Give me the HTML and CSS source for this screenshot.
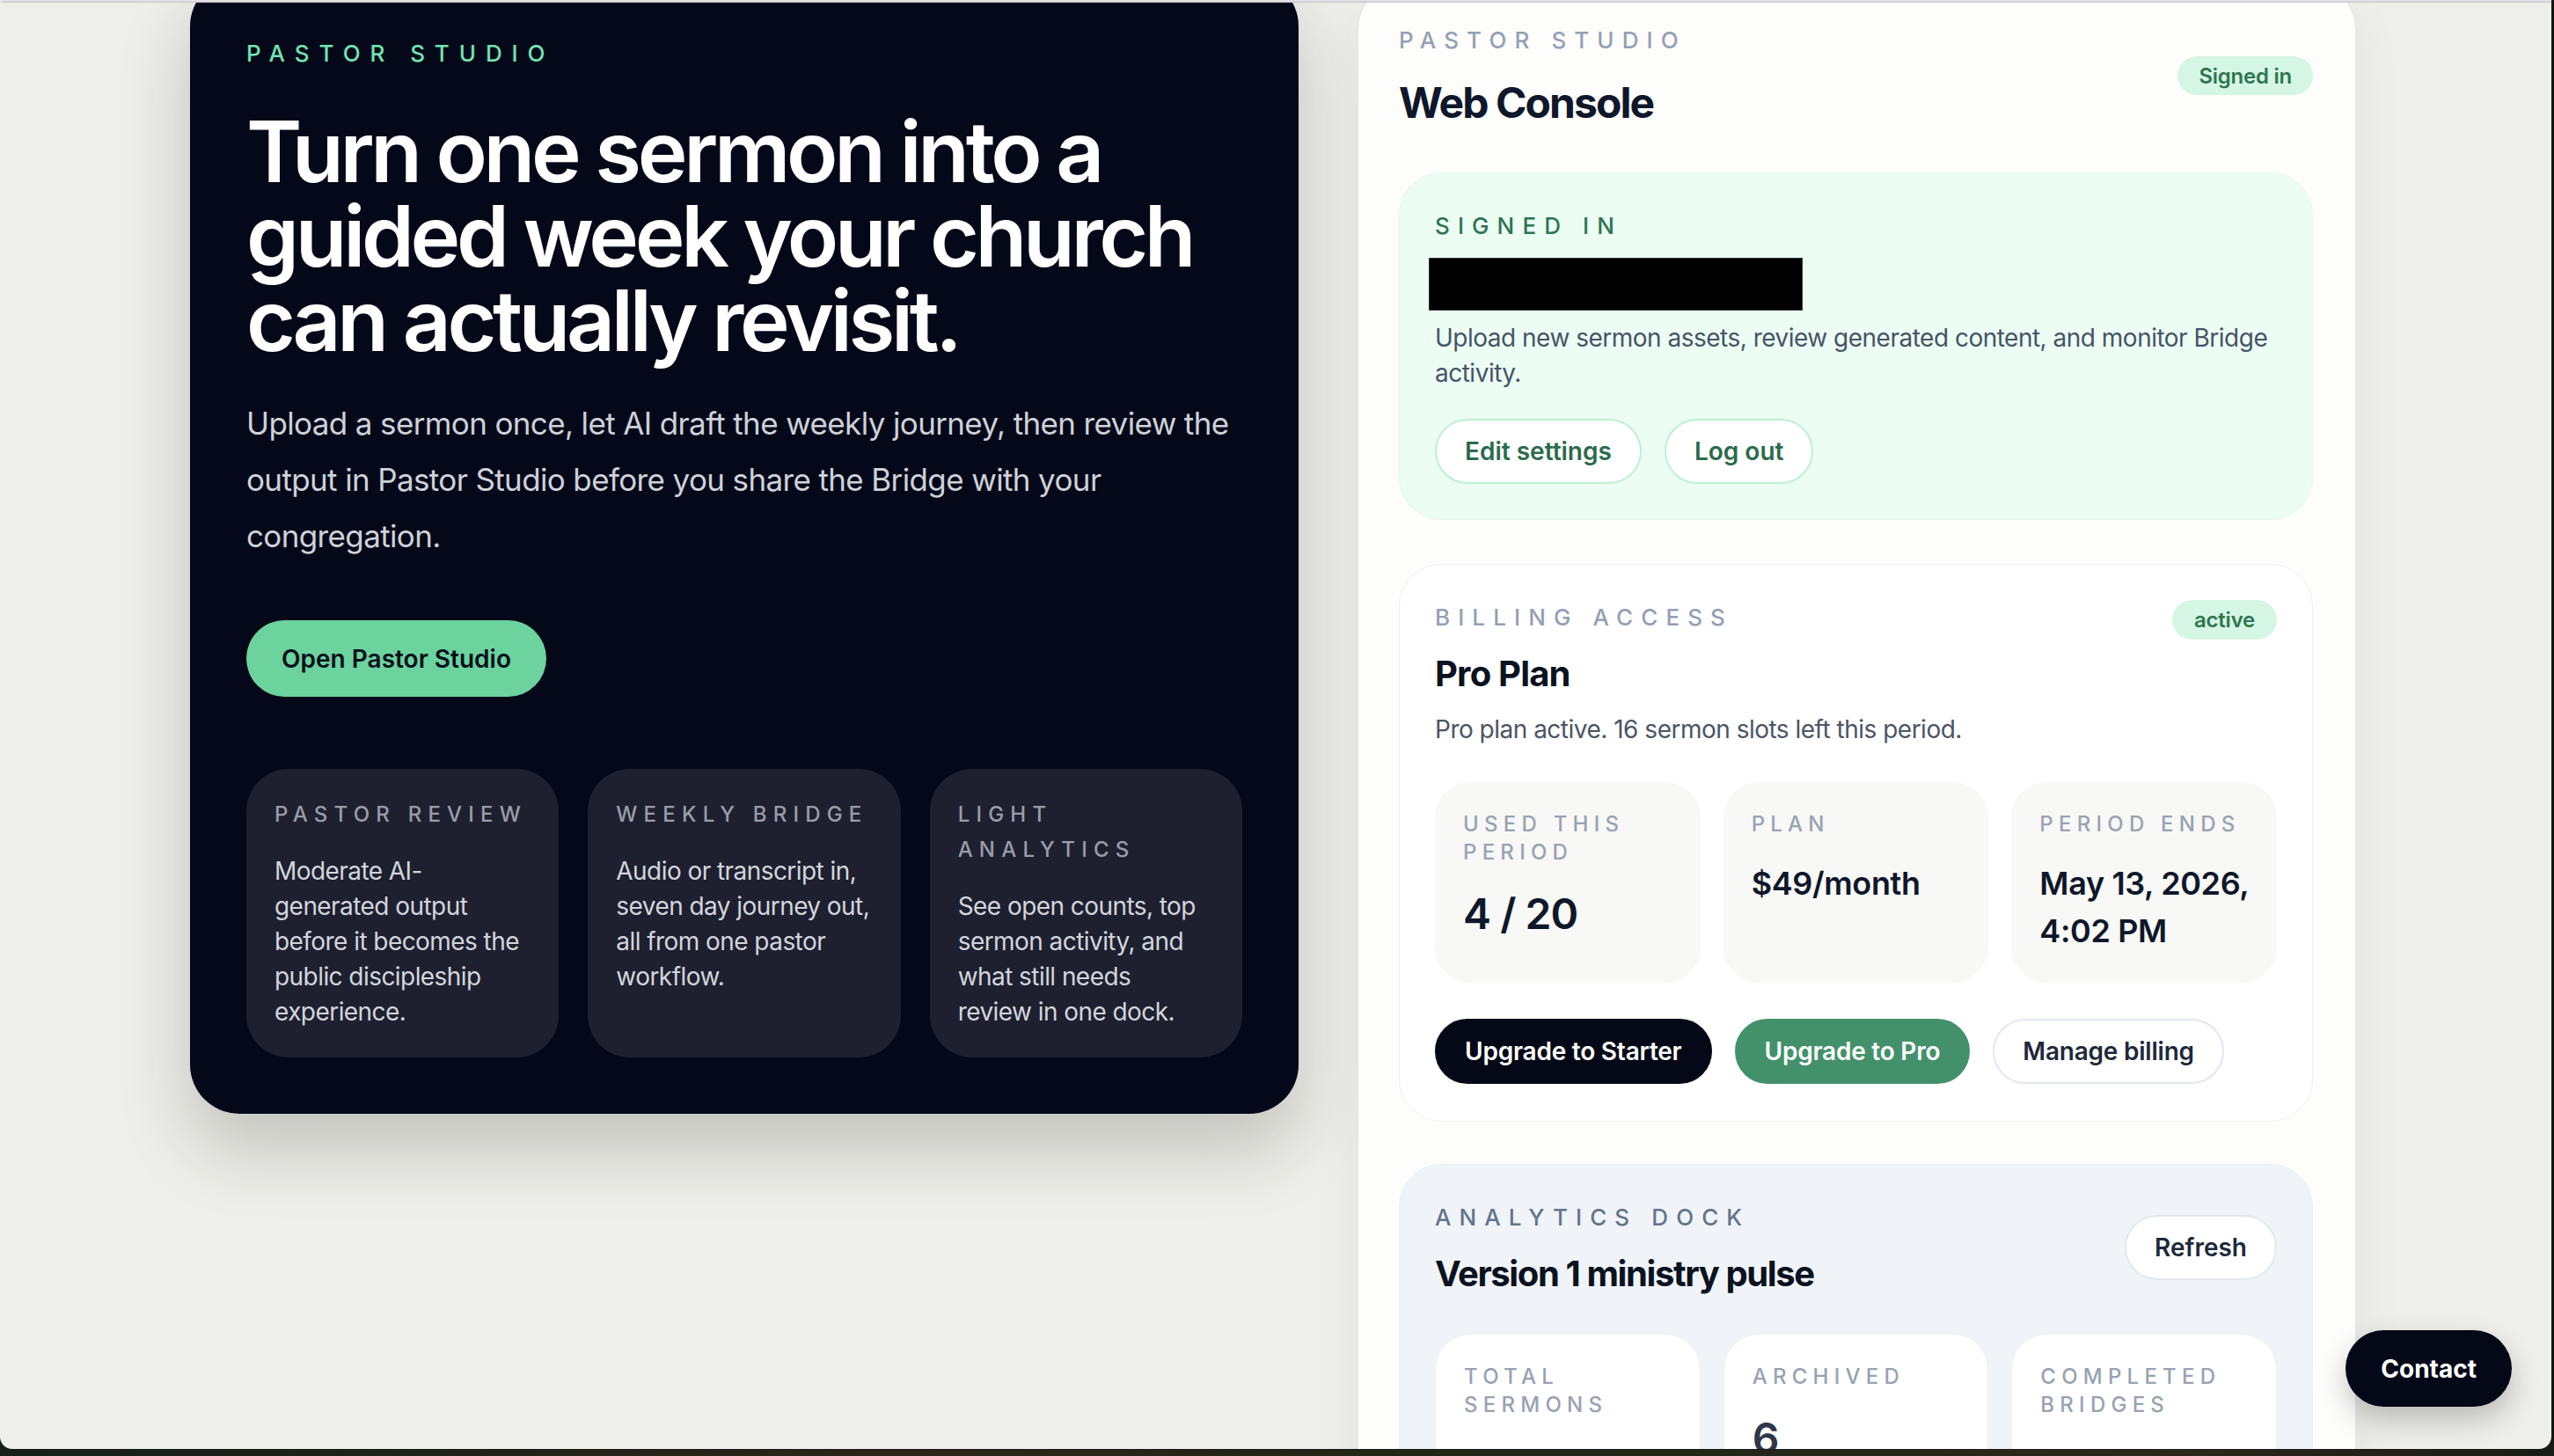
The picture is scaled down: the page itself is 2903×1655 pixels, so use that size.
FILE: index.html
```html
<!DOCTYPE html>
<html lang="en">
<head>
<meta charset="utf-8">
<title>Pastor Studio</title>
<link rel="stylesheet" href="styles.css">
</head>
<body>
<div class="chrome"></div>
<div class="viewport">
  <main class="layout">
    <section class="hero">
      <p class="hero-eyebrow">PASTOR STUDIO</p>
      <h1 class="hero-title">Turn one sermon into a<br>guided week your church<br>can actually revisit.</h1>
      <p class="hero-lede">Upload a sermon once, let AI draft the weekly journey, then review the output in Pastor Studio before you share the Bridge with your congregation.</p>
      <div class="hero-actions"><a class="btn-open" href="#">Open Pastor Studio</a></div>
      <div class="features">
        <div class="feature">
          <h3 class="feature-title">PASTOR REVIEW</h3>
          <p class="feature-text">Moderate AI-generated output before it becomes the public discipleship experience.</p>
        </div>
        <div class="feature">
          <h3 class="feature-title">WEEKLY BRIDGE</h3>
          <p class="feature-text">Audio or transcript in, seven day journey out, all from one pastor workflow.</p>
        </div>
        <div class="feature">
          <h3 class="feature-title">LIGHT ANALYTICS</h3>
          <p class="feature-text">See open counts, top sermon activity, and what still needs review&nbsp;in one dock.</p>
        </div>
      </div>
    </section>

    <aside class="console">
      <header class="console-head">
        <div>
          <p class="eyebrow eyebrow-slate">PASTOR STUDIO</p>
          <h2 class="console-title">Web Console</h2>
        </div>
        <span class="pill">Signed in</span>
      </header>

      <section class="card card-signed">
        <p class="eyebrow eyebrow-green">SIGNED IN</p>
        <div class="redacted"></div>
        <p class="body-text">Upload new sermon assets, review generated content, and monitor Bridge activity.</p>
        <div class="btn-row">
          <button class="btn btn-mint">Edit settings</button>
          <button class="btn btn-mint">Log out</button>
        </div>
      </section>

      <section class="card card-billing">
        <div class="card-row card-row-top">
          <p class="eyebrow eyebrow-slate">BILLING ACCESS</p>
          <span class="pill pill-active">active</span>
        </div>
        <h3 class="card-title card-title-billing">Pro Plan</h3>
        <p class="body-text body-muted">Pro plan active. 16 sermon slots left this period.</p>
        <div class="stats">
          <div class="stat">
            <p class="stat-label">USED THIS PERIOD</p>
            <p class="stat-big">4 / 20</p>
          </div>
          <div class="stat">
            <p class="stat-label">PLAN</p>
            <p class="stat-mid">$49/month</p>
          </div>
          <div class="stat">
            <p class="stat-label">PERIOD ENDS</p>
            <p class="stat-mid">May 13, 2026, 4:02 PM</p>
          </div>
        </div>
        <div class="btn-row btn-row-billing">
          <button class="btn btn-dark">Upgrade to Starter</button>
          <button class="btn btn-green">Upgrade to Pro</button>
          <button class="btn btn-light">Manage billing</button>
        </div>
      </section>

      <section class="card card-analytics">
        <div class="card-row">
          <div>
            <p class="eyebrow eyebrow-dark">ANALYTICS DOCK</p>
            <h3 class="card-title card-title-wide">Version 1 ministry pulse</h3>
          </div>
          <button class="btn btn-light btn-refresh">Refresh</button>
        </div>
        <div class="stats stats-analytics">
          <div class="stat stat-white">
            <p class="stat-label">TOTAL SERMONS</p>
            <p class="stat-big stat-slate">20</p>
          </div>
          <div class="stat stat-white">
            <p class="stat-label">ARCHIVED</p>
            <p class="stat-big stat-slate">6</p>
          </div>
          <div class="stat stat-white">
            <p class="stat-label">COMPLETED BRIDGES</p>
            <p class="stat-big stat-slate">3</p>
          </div>
        </div>
      </section>
    </aside>
  </main>
  <button class="contact">Contact</button>
</div>
</body>
</html>
```

FILE: styles.css
```css
* {
  box-sizing: border-box;
  margin: 0;
  padding: 0;
}

html, body {
  height: 100%;
}

body {
  overflow: hidden;
  font-family: "Inter", "Noto Sans", sans-serif;
  background: linear-gradient(90deg, #16201a 0%, #2a2519 35%, #1f2619 60%, #2c281d 85%, #1a1d17 100%);
}

.chrome {
  width: 2900px;
  height: 3px;
  background: #e4e4e9;
}

.viewport {
  position: relative;
  width: 2900px;
  height: 1644px;
  overflow: hidden;
  background: #eeeeea;
  border-radius: 0 0 14px 14px;
  box-shadow: 3px 0 3px rgba(0, 0, 0, 0.35);
}

.layout {
  display: flex;
  align-items: flex-start;
  gap: 67px;
  margin: -29px 0 0 216px;
}

/* ---------- hero ---------- */
.hero {
  flex: 0 0 1260px;
  background: #040818;
  border-radius: 56px;
  padding: 64px;
  box-shadow: 0 40px 80px rgba(40, 40, 30, 0.22);
}

.hero-eyebrow {
  font-size: 26px;
  line-height: 46px;
  font-weight: 500;
  letter-spacing: 0.42em;
  color: #72e3b2;
}

.hero-title {
  margin-top: 40px;
  font-size: 96px;
  line-height: 96px;
  font-weight: 600;
  letter-spacing: -0.045em;
  color: #ffffff;
}

.hero-lede {
  margin-top: 37px;
  font-size: 35px;
  line-height: 64px;
  letter-spacing: -0.018em;
  color: #cdd1d9;
}

.hero-actions {
  margin-top: 64px;
}

.btn-open {
  display: inline-flex;
  align-items: center;
  height: 87px;
  padding: 0 40px;
  border-radius: 999px;
  background: #6cd39f;
  color: #07101a;
  font-size: 28px;
  font-weight: 600;
  text-decoration: none;
}

.features {
  display: grid;
  grid-template-columns: repeat(3, 1fr);
  gap: 33px;
  margin-top: 82px;
}

.feature {
  background: #1e2030;
  border-radius: 48px;
  padding: 32px;
}

.feature-title {
  font-size: 24px;
  line-height: 40px;
  font-weight: 500;
  letter-spacing: 0.3em;
  color: #9a9da8;
}

.feature-text {
  margin-top: 24px;
  font-size: 28px;
  line-height: 40px;
  letter-spacing: -0.02em;
  color: #d3d5dc;
}

/* ---------- console ---------- */
.console {
  flex: 0 0 1135px;
  margin-top: 4px;
  background: #fdfdfb;
  border: 1px solid #e5e7ee;
  border-radius: 56px;
  padding: 47px 48px 47px 46px;
  box-shadow: 0 20px 60px rgba(0, 0, 0, 0.06);
}

.console-head {
  display: flex;
  justify-content: space-between;
  align-items: center;
  margin-bottom: 50px;
}

.eyebrow {
  font-size: 26px;
  line-height: 40px;
  font-weight: 500;
  letter-spacing: 0.35em;
}

.eyebrow-slate { color: #94a0b5; }
.eyebrow-green { color: #2f7552; }
.eyebrow-dark { color: #64748b; }

.console-title {
  margin-top: 22px;
  font-size: 48px;
  line-height: 58px;
  font-weight: 700;
  letter-spacing: -0.04em;
  color: #0f172a;
}

.pill {
  display: inline-flex;
  align-items: center;
  height: 44px;
  padding: 0 24px;
  border-radius: 999px;
  background: #d5f6e4;
  color: #2f7552;
  font-size: 24px;
  font-weight: 600;
  letter-spacing: -0.01em;
}

.pill-active {
  height: 45px;
  padding: 0 25px;
}

.card {
  border-radius: 48px;
  padding: 40px;
}

.card-signed {
  margin-bottom: 50px;
  background: #ecfdf4;
  border: 1px solid #e4f9ee;
}

.card-billing {
  margin-bottom: 48px;
  padding-bottom: 42px;
  background: #ffffff;
  border: 1px solid #eef0f3;
}

.card-analytics {
  background: #f0f4f8;
  border: 1px solid #edf1f6;
}

.redacted {
  width: 425px;
  height: 60px;
  margin: 16px 0 0 -7px;
  background: #000000;
  border: 1px solid #333;
}

.body-text {
  margin-top: 11px;
  font-size: 28px;
  line-height: 40px;
  letter-spacing: -0.018em;
  color: #475467;
}

.body-muted {
  margin-top: 19px;
  color: #4b5565;
}

.btn-row {
  display: flex;
  gap: 26px;
  margin-top: 32px;
}

.btn-row-billing {
  margin-top: 41px;
}

.btn {
  display: inline-flex;
  align-items: center;
  height: 74px;
  padding: 0 32px;
  border-radius: 999px;
  font-family: inherit;
  font-size: 28px;
  font-weight: 600;
  letter-spacing: -0.008em;
  border: 2px solid transparent;
  cursor: pointer;
}

.btn-mint {
  background: #ffffff;
  border-color: #bdf0d5;
  color: #2b6b4b;
  letter-spacing: 0;
}

.btn-refresh {
  letter-spacing: 0;
}

.btn-dark {
  background: #050816;
  border-color: #050816;
  color: #ffffff;
}

.btn-green {
  background: #43916a;
  border-color: #43916a;
  color: #ffffff;
}

.btn-light {
  background: #ffffff;
  border-color: #e3e7ee;
  color: #1e293b;
}

.card-row {
  display: flex;
  justify-content: space-between;
  align-items: center;
}

.card-row-top {
  align-items: flex-start;
}

.card-title {
  margin-top: 20px;
  font-size: 40px;
  line-height: 48px;
  font-weight: 700;
  letter-spacing: -0.02em;
  color: #0b1220;
}

.card-title-billing {
  margin-top: 15px;
}

.card-title-wide {
  letter-spacing: -0.035em;
}

.stats {
  display: grid;
  grid-template-columns: repeat(3, 1fr);
  gap: 26px;
  margin-top: 40px;
}

.stats-analytics {
  margin-top: 44px;
}

.stat {
  background: #f8f8f6;
  border-radius: 40px;
  padding: 32px;
}

.stat-white {
  background: #ffffff;
  border: 1px solid #edf0f4;
}

.stat-label {
  font-size: 24px;
  line-height: 32px;
  font-weight: 500;
  letter-spacing: 0.26em;
  color: #98a2b3;
}

.stat-big {
  margin-top: 24px;
  font-size: 48px;
  line-height: 60px;
  font-weight: 600;
  letter-spacing: -0.02em;
  color: #0f172a;
}

.stat-slate {
  color: #2d3748;
}

.stat-mid {
  margin-top: 24px;
  font-size: 36px;
  line-height: 54px;
  font-weight: 600;
  letter-spacing: -0.01em;
  color: #0f172a;
}

/* ---------- floating contact ---------- */
.contact {
  position: absolute;
  right: 45px;
  bottom: 48px;
  height: 87px;
  padding: 0 40px;
  border: none;
  border-radius: 999px;
  background: #050816;
  color: #ffffff;
  font-family: inherit;
  font-size: 28px;
  font-weight: 700;
  box-shadow: 0 14px 32px rgba(0, 0, 0, 0.22);
}
```
